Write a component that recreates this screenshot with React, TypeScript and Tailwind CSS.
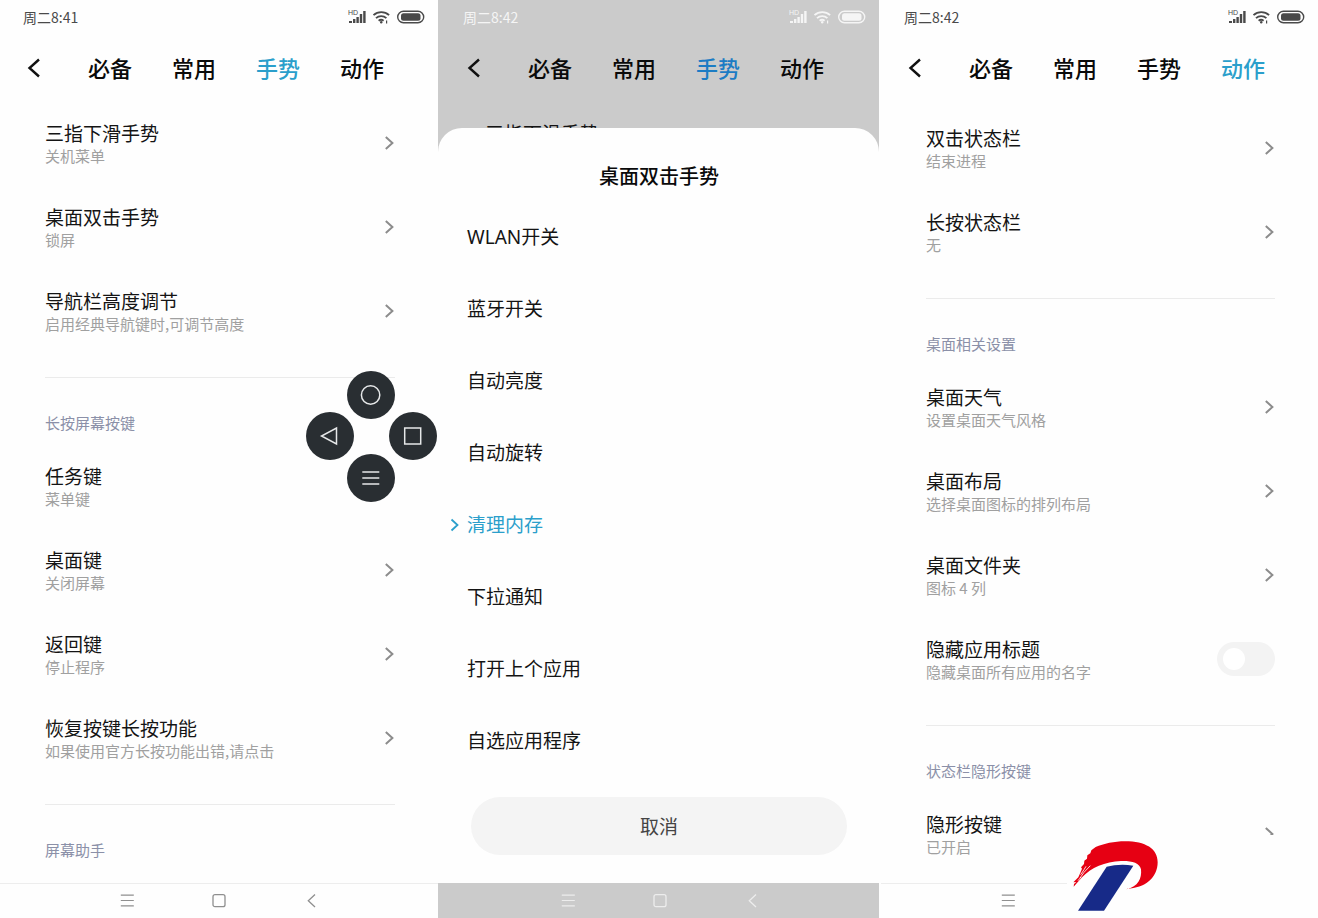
import { useState, type ReactNode } from "react";

const tabs = ["必备", "常用", "手势", "动作"];

type Item = { title: string; desc: string; toggle?: boolean };
type Section = { heading?: string; items: Item[] };

const gestureSections: Section[] = [
  {
    items: [
      { title: "三指下滑手势", desc: "关机菜单" },
      { title: "桌面双击手势", desc: "锁屏" },
      { title: "导航栏高度调节", desc: "启用经典导航键时,可调节高度" },
    ],
  },
  {
    heading: "长按屏幕按键",
    items: [
      { title: "任务键", desc: "菜单键" },
      { title: "桌面键", desc: "关闭屏幕" },
      { title: "返回键", desc: "停止程序" },
      { title: "恢复按键长按功能", desc: "如果使用官方长按功能出错,请点击" },
    ],
  },
  { heading: "屏幕助手", items: [] },
];

const actionSections: Section[] = [
  {
    items: [
      { title: "双击状态栏", desc: "结束进程" },
      { title: "长按状态栏", desc: "无" },
    ],
  },
  {
    heading: "桌面相关设置",
    items: [
      { title: "桌面天气", desc: "设置桌面天气风格" },
      { title: "桌面布局", desc: "选择桌面图标的排列布局" },
      { title: "桌面文件夹", desc: "图标 4 列" },
      { title: "隐藏应用标题", desc: "隐藏桌面所有应用的名字", toggle: true },
    ],
  },
  {
    heading: "状态栏隐形按键",
    items: [{ title: "隐形按键", desc: "已开启" }],
  },
];

const options = ["WLAN开关", "蓝牙开关", "自动亮度", "自动旋转", "清理内存", "下拉通知", "打开上个应用", "自选应用程序"];

function StatusIcons() {
  return (
    <svg width="77" height="16" viewBox="0 0 77 16" fill="currentColor" aria-hidden="true">
      <text x="0" y="6" fontSize="7" fontFamily="Liberation Sans, sans-serif">HD</text>
      <rect x="1" y="12" width="3" height="2" />
      <rect x="5" y="10" width="2.4" height="4" />
      <rect x="8.4" y="8" width="2.4" height="6" />
      <rect x="11.8" y="5" width="2.4" height="9" />
      <rect x="15.2" y="2" width="2.4" height="12" />
      <g fill="none" stroke="currentColor" strokeWidth="1.8">
        <path d="M25.5 6.2a11.5 11.5 0 0 1 15.6 0" />
        <path d="M28 9.2a7.6 7.6 0 0 1 10.4 0" />
        <path d="M30.6 11.8a4 4 0 0 1 5 0" />
      </g>
      <circle cx="33.2" cy="13.3" r="1.2" />
      <rect x="38" y="11.5" width="1.2" height="3" />
      <rect x="49.7" y="2.2" width="26" height="11.6" rx="5.8" fill="none" stroke="currentColor" strokeWidth="1.4" />
      <rect x="53" y="4.2" width="19.5" height="7.6" rx="2.5" />
    </svg>
  );
}

function Chevron() {
  return (
    <svg width="10" height="16" viewBox="0 0 10 16" fill="none" stroke="#8c8c8c" strokeWidth="2" aria-hidden="true">
      <path d="M.8 2 7.4 8 .8 14" />
    </svg>
  );
}

function Header({ time, active, dimmed }: { time: string; active: string; dimmed?: boolean }) {
  return (
    <header>
      <div className={`flex h-[34px] items-center justify-between pr-[13px] pl-[23px] ${dimmed ? "text-[#f5f5f5]" : "text-[#4a4a4a]"}`}>
        <span className="text-[14px]">{time}</span>
        <StatusIcons />
      </div>
      <div className="flex h-[67px] items-center pl-[27px]">
        <button aria-label="返回" className="mr-[47px]">
          <svg width="14" height="20" viewBox="0 0 14 20" fill="none" stroke="#111" strokeWidth="2.4">
            <path d="M12 1.5 2.5 10l9.5 8.5" />
          </svg>
        </button>
        <nav className="flex gap-10">
          {tabs.map((t) => (
            <button
              key={t}
              className={`text-[22px] font-medium ${t !== active ? "text-[#0a0a0a]" : dimmed ? "text-[#1c7cc4]" : "text-[#2b9fcb]"}`}
            >
              {t}
            </button>
          ))}
        </nav>
      </div>
    </header>
  );
}

function SoftKeys({ dimmed }: { dimmed?: boolean }) {
  return (
    <footer className={`flex h-[35px] items-center justify-center border-t ${dimmed ? "border-[#cbcbcb] text-[#ededed]" : "border-[#ededed] text-[#8f8f8f]"}`}>
      <button aria-label="菜单" className="flex w-[92px] justify-center">
        <svg width="14" height="14" viewBox="0 0 14 14" fill="none" stroke="currentColor" strokeWidth="1.2">
          <path d="M.8 1.2h13M.8 6.5h13M.8 11.8h13" />
        </svg>
      </button>
      <button aria-label="主页" className="flex w-[92px] justify-center">
        <svg width="14" height="14" viewBox="0 0 14 14" fill="none" stroke="currentColor" strokeWidth="1.3">
          <rect x="1" y=".7" width="12" height="12" rx="2" />
        </svg>
      </button>
      <button aria-label="返回" className="flex w-[92px] justify-center">
        <svg width="14" height="14" viewBox="0 0 14 14" fill="none" stroke="currentColor" strokeWidth="1.3">
          <path d="M11 .5 4.3 6.7l6.7 6.2" />
        </svg>
      </button>
    </footer>
  );
}

function ItemText({ item }: { item: Item }) {
  return (
    <span>
      <span className="block text-[19px] leading-[26px] text-[#141414]">{item.title}</span>
      <span className="block text-[15px] leading-[20px] text-[#a0a0a0]">{item.desc}</span>
    </span>
  );
}

function SettingsList({ sections }: { sections: Section[] }) {
  const [hideTitles, setHideTitles] = useState(false);

  return (
    <div className="pr-[43px] pl-[45px]">
      {sections.map((s, i) => (
        <section key={i} className={i > 0 ? "mt-6 border-t border-[#ebebeb]" : ""}>
          {s.heading && <h2 className="pt-[35px] pb-[11px] text-[15px] leading-[20px] text-[#8b90a8]">{s.heading}</h2>}
          {s.items.map((item) =>
            item.toggle ? (
              <label key={item.title} className="flex h-[84px] items-center justify-between">
                <ItemText item={item} />
                <input
                  type="checkbox"
                  checked={hideTitles}
                  onChange={(e) => setHideTitles(e.target.checked)}
                  className="flex h-[34px] w-[58px] appearance-none items-center rounded-full bg-[#f3f3f3] px-[6px] before:size-[22px] before:rounded-full before:bg-white checked:justify-end checked:bg-[#2b9fcb]"
                />
              </label>
            ) : (
              <button key={item.title} className="flex h-[84px] w-full items-center justify-between text-left">
                <ItemText item={item} />
                <Chevron />
              </button>
            )
          )}
        </section>
      ))}
    </div>
  );
}

function PadButton({ label, className, children }: { label: string; className: string; children: ReactNode }) {
  return (
    <button aria-label={label} className={`absolute flex size-12 items-center justify-center rounded-full bg-[#292e32] ${className}`}>
      <svg width="24" height="24" viewBox="0 0 24 24" fill="none" stroke="#e6e8e9" strokeWidth="1.5">
        {children}
      </svg>
    </button>
  );
}

// floating navigation pad that hovers over the list
function FloatingPad() {
  return (
    <div className="absolute top-[371px] right-px size-[131px]">
      <PadButton label="主页" className="top-0 left-[41px]">
        <circle cx="11.6" cy="12" r="9.2" />
      </PadButton>
      <PadButton label="返回" className="top-[41px] left-0">
        <path d="M18.5 4v16L3.5 12z" />
      </PadButton>
      <PadButton label="最近任务" className="top-[41px] right-0">
        <rect x="3.7" y="4" width="16" height="16" />
      </PadButton>
      <PadButton label="菜单" className="bottom-0 left-[41px]">
        <path d="M3.3 6h17M3.3 12h17M3.3 18h17" />
      </PadButton>
    </div>
  );
}

function ActionSheet() {
  const [selected, setSelected] = useState("清理内存");

  return (
    <div role="dialog" aria-labelledby="sheet-title" className="absolute inset-x-0 bottom-[35px] rounded-t-[24px] bg-[#fefefe] pr-8 pb-7 pl-[33px]">
      <h2 id="sheet-title" className="pt-[34px] pb-[11px] text-center text-[20px] leading-[28px] font-medium text-[#0a0a0a]">
        桌面双击手势
      </h2>
      <ul className="font-['Noto_Sans','Noto_Sans_CJK_SC',sans-serif]">
        {options.map((o) => (
          <li key={o}>
            <button
              onClick={() => setSelected(o)}
              className={`relative -ml-1 flex h-[72px] w-full items-center text-[19px] ${o === selected ? "text-[#2b9fcb]" : "text-[#141414]"}`}
            >
              {o === selected && (
                <svg className="absolute -left-[17px]" width="9" height="14" viewBox="0 0 9 14" fill="none" stroke="currentColor" strokeWidth="1.8" aria-hidden="true">
                  <path d="M1.5 1.5 7.5 7l-6 5.5" />
                </svg>
              )}
              {o}
            </button>
          </li>
        ))}
      </ul>
      <button className="mt-5 h-[58px] w-full rounded-full bg-[#f4f4f4] text-[19px] text-[#444]">取消</button>
    </div>
  );
}

function BrandMark() {
  return (
    <div className="absolute right-0 bottom-0 h-[83px] w-[251px] bg-[#fefefe] pt-[6px] pl-[6px]">
      <svg width="86" height="70" viewBox="41 94 258 210" role="img" aria-label="P">
        <path
          fill="#e60013"
          d="M202 239c34-8 46-32 43-60-4-20-29-26-60-25-48 2-90 20-117 49L43 231l1-8 7-6-9 1 15-15 6-14 5-12-3-4 9-10 1-10 8-6 1-10 9-6 3-9 13-10c24-10 56-17 88-17 62 0 98 22 98 63 0 46-38 78-92 79z"
        />
        <path stroke="#fefefe" strokeWidth="2.5" fill="none" d="m64 195 10-15 6-10M62 205l12-17 19-20M56 213l9-11" />
        <path fill="#172a88" d="M142 171c24-6 52-8 80-3L134 303H56z" />
      </svg>
    </div>
  );
}

export default function App() {
  return (
    <div
      lang="zh-CN"
      className="grid min-h-screen grid-cols-[438fr_441fr_439fr] bg-[#fefefe] font-['Noto_Sans_CJK_SC',sans-serif]"
    >
      <div className="relative flex flex-col">
        <Header time="周二8:41" active="手势" />
        <main className="flex-1 overflow-hidden">
          <SettingsList sections={gestureSections} />
        </main>
        <SoftKeys />
        <FloatingPad />
      </div>

      <div className="relative flex flex-col bg-[#cbcbcb] pl-0.5">
        <Header time="周二8:42" active="手势" dimmed />
        {/* only the top of the first row shows above the sheet */}
        <main className="flex-1 overflow-hidden pl-[45px]">
          <p className="mt-[19px] text-[19px] leading-[26px] text-[#141414]">三指下滑手势</p>
        </main>
        <SoftKeys dimmed />
        <ActionSheet />
      </div>

      <div className="relative flex flex-col pl-0.5">
        <Header time="周二8:42" active="动作" />
        <main className="flex-1 overflow-hidden pt-[5px]">
          <SettingsList sections={actionSections} />
        </main>
        <SoftKeys />
        <BrandMark />
      </div>
    </div>
  );
}
